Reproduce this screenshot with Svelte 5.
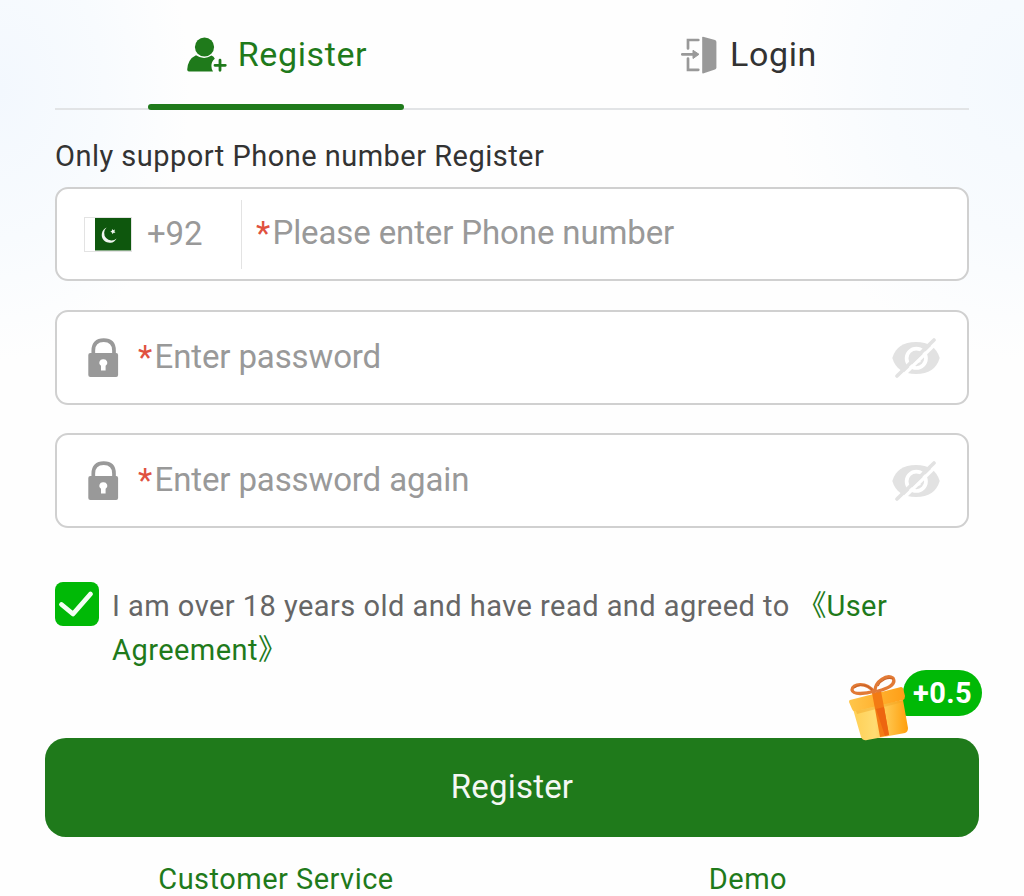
<script lang="ts">
  let phone = $state('');
  let agreed = $state(true);
  let active = $state('register');

  const passwords = [
    { id: 'password', placeholder: 'Enter password' },
    { id: 'confirm', placeholder: 'Enter password again' },
  ];
</script>

<main class="page">
  <nav class="tabs">
    <button type="button" class="tab" class:active={active === 'register'} onclick={() => (active = 'register')}>
      <svg class="user-icon" width="40" height="36" viewBox="0 0 40 36" fill="currentColor">
        <circle cx="17.5" cy="10" r="9.6" />
        <path d="M9 18.2 Q17 23.6 24.5 18.5 Q27 19.5 27.8 21.8 Q24.3 24.8 24.4 29 Q24.4 32 26 34.6 H2 Q0.2 34.6 0.2 32.6 Q0.8 22 9 18.2Z" />
        <path d="M33 23.2V33.3M28 28.3H38.3" fill="none" stroke="currentColor" stroke-width="2.8" stroke-linecap="round" />
      </svg>
      <span>Register</span>
    </button>
    <button type="button" class="tab" class:active={active === 'login'} onclick={() => (active = 'login')}>
      <svg class="door-icon" width="36" height="38" viewBox="0 0 36 38">
        <path d="M17.3 4H7V12.5M7 22.6V33.8H17.3" fill="none" stroke="#999" stroke-width="2.7" stroke-linecap="round" />
        <path d="M1.3 18.3H12" fill="none" stroke="#999" stroke-width="2.7" stroke-linecap="round" />
        <path d="M12 14.3L18 18.3L12 22.5Z" fill="#999" stroke="#999" stroke-linejoin="round" />
        <path d="M22 .8L34 4Q35.4 4.5 35.4 6V31.5Q35.4 33 34 33.5L22 37.4Q21.2 37.4 21.2 36.5V1.5Q21.2.7 22 .8Z" fill="#999" />
      </svg>
      <span>Login</span>
    </button>
  </nav>

  <form class="form" onsubmit={(e) => e.preventDefault()}>
    <label class="caption" for="phone">Only support Phone number Register</label>

    <div class="field phone">
      <div class="country">
        <svg width="48" height="36" viewBox="0 0 48 36">
          <rect x=".5" y="1.5" width="47" height="34" fill="#fff" stroke="#e3e3e3" />
          <rect x="11" y="2" width="36" height="32.5" fill="#0e570d" />
          <path d="M22.6 11.6A7.9 7.9 0 1 0 32.6 22.6A6.9 6.9 0 1 1 22.6 11.6Z" fill="#f1f7f1" />
          <path d="M28 13L29.3 14.2L31 13.6L30.4 15.3L31.4 16.8L29.6 16.8L28.5 18.3L28 16.5L26.3 15.8L27.9 14.8Z" fill="#f1f7f1" />
        </svg>
        <span>+92</span>
      </div>
      <span class="star">*</span>
      <input id="phone" type="tel" placeholder="Please enter Phone number" bind:value={phone} />
    </div>

    {#each passwords as item}
      <div class="field">
        <svg class="lock" width="32" height="40" viewBox="0 0 32 40">
          <path d="M5.3 17V12.5Q5.3 2.1 15.7 2.1Q26 2.1 26 12.5V17" fill="none" stroke="#999" stroke-width="3.7" />
          <rect x=".3" y="15" width="29.8" height="24" rx="2" fill="#999" />
          <path d="M15.3 21.2A3.6 3.6 0 0 1 17.6 27.8V32.6H13V27.8A3.6 3.6 0 0 1 15.3 21.2Z" fill="#fff" />
        </svg>
        <span class="star">*</span>
        <input id={item.id} type="password" placeholder={item.placeholder} />
        <svg class="eye" width="48" height="40" viewBox="0 0 48 40">
          <path d="M.3 20Q5 4 24 4Q43 4 47.7 20Q43 36 24 36Q5 36 .3 20Z" fill="#e2e2e2" />
          <circle cx="24.3" cy="20.3" r="9.7" fill="none" stroke="#fff" stroke-width="3.7" />
          <path d="M27 21.5L24.5 25.2L29 24Z" fill="#fff" />
          <path d="M7.5 41L45 4.4" stroke="#fff" stroke-width="3.4" />
          <path d="M5 38L42 2" stroke="#e2e2e2" stroke-width="3.6" stroke-linecap="round" />
        </svg>
      </div>
    {/each}

    <div class="agreement">
      <button
        type="button"
        class="check"
        role="checkbox"
        aria-checked={agreed}
        aria-label="Agree"
        onclick={() => (agreed = !agreed)}
      >
        {#if agreed}
          <svg width="44" height="44" viewBox="0 0 44 44">
            <path d="M6.5 22.5L18 32L35.5 12" fill="none" stroke="#f4fff4" stroke-width="4.8" stroke-linecap="round" stroke-linejoin="round" />
          </svg>
        {/if}
      </button>
      <p>
        I am over 18 years old and have read and agreed to
        <span class="link"><span class="bracket open">《</span>User<br />Agreement<span class="bracket">》</span></span>
      </p>
    </div>

    <div class="submit-wrap">
      <button type="submit" class="submit">Register</button>
      <div class="bonus">+0.5</div>
      <svg class="gift" width="64" height="68" viewBox="0 0 64 68">
        <defs>
          <linearGradient id="box" x1="0" x2="1">
            <stop offset="0" stop-color="#ffcf55" />
            <stop offset=".4" stop-color="#ffdc72" />
            <stop offset="1" stop-color="#ff9f0d" />
          </linearGradient>
          <linearGradient id="lid" x1="0" x2="1">
            <stop offset="0" stop-color="#ffc64b" />
            <stop offset="1" stop-color="#ff9e16" />
          </linearGradient>
        </defs>
        <path d="M5 35L55 26L60 54Q60 58 57 59L19 66Q15 67 13 63Z" fill="url(#box)" />
        <path d="M2 26L53 13Q55 13 55.500 16L57 22Q57 25 55 26L8 37Q5 38 4 35L1 28Q1 26 2 26Z" fill="url(#lid)" />
        <path d="M8 37L55 26L55 28L9 40Z" fill="#efa424" opacity=".45" />
        <path d="M24 19L33 17L36 33L41 61L32 63L27 35Z" fill="#f37b13" />
        <path d="M28 35L36 33L41 61L37 62Z" fill="#ed6510" />
        <path d="M26 18C18 7 4 10 4 16C5 21 17 20 27 17C27 7 39 0 45 4C49 11 38 15 30 17" fill="none" stroke="#e27a35" stroke-width="3.3" stroke-linecap="round" stroke-linejoin="round" />
        <path d="M6 14C12 9 20 11 24 16M30 12C33 6 40 3 45 5" fill="none" stroke="#cc6428" stroke-width="1.3" />
      </svg>
    </div>
  </form>

  <footer>
    <a href="#service">Customer Service</a>
    <a href="#demo">Demo</a>
  </footer>
</main>

<style>
  :global(body) {
    background: #fefefe;
  }

  .page {
    box-sizing: border-box;
    height: 896px;
    padding: 0 40px;
    overflow: hidden;
    font-family: Roboto, 'Noto Sans CJK SC', sans-serif;
    color: #333;
    background:
      radial-gradient(ellipse 190px 270px at 0 90px, #f3f8fe 0%, #f8fbfe 55%, #fefefe00 100%),
      radial-gradient(ellipse 250px 280px at 100% 80px, #f4f9fe 0%, #f8fbfe 55%, #fefefe00 100%);
  }

  button {
    margin: 0;
    padding: 0;
    border: 0;
    background: none;
    font: inherit;
    color: inherit;
    cursor: pointer;
  }

  .tabs {
    position: relative;
    display: grid;
    grid-template-columns: 1fr 1fr;
    height: 110px;
  }

  .tabs::before {
    content: '';
    position: absolute;
    left: 15px;
    right: 15px;
    bottom: 0;
    height: 2px;
    background: #e2e4e6;
  }

  .tab {
    position: relative;
    display: flex;
    align-items: center;
    justify-content: center;
    padding-left: 2px;
    font-size: 34px;
    letter-spacing: 0.6px;
  }

  .tab span {
    line-height: 40px;
    padding-bottom: 2px;
  }

  .tab.active {
    color: #1f7a1b;
  }

  .tab.active::after {
    content: '';
    position: absolute;
    bottom: 0;
    left: 108px;
    width: 256px;
    height: 6px;
    border-radius: 3px;
    background: #1f7a1b;
  }

  .user-icon {
    margin-right: 11px;
  }

  .door-icon {
    margin-right: 13px;
  }

  .form {
    padding: 0 15px;
  }

  .caption {
    display: block;
    height: 77px;
    line-height: 92px;
    font-size: 29px;
    letter-spacing: 0.48px;
  }

  .field {
    box-sizing: border-box;
    display: flex;
    align-items: center;
    height: 95px;
    margin-bottom: 28px;
    padding: 0 27px 0 31px;
    border: 2px solid #d0d0d0;
    border-radius: 13px;
    background: #fff;
    font-size: 33px;
    letter-spacing: -0.12px;
    color: #999;
  }

  .phone {
    height: 94px;
    margin-bottom: 29px;
    padding-left: 27px;
  }

  .country {
    display: flex;
    align-items: center;
    box-sizing: border-box;
    width: 158px;
    height: 69px;
    margin-right: 14px;
    border-right: 1px solid #e3e3e3;
  }

  .country span {
    margin-left: 15px;
    padding-bottom: 1px;
  }

  .star {
    width: 16.5px;
    padding-bottom: 1px;
    color: #e0523f;
  }

  .lock {
    margin-right: 18px;
  }

  input {
    flex: 1;
    min-width: 0;
    padding: 0 0 3px;
    border: 0;
    outline: 0;
    background: none;
    font: inherit;
    letter-spacing: inherit;
    color: #333;
  }

  input::placeholder {
    color: #999;
    opacity: 1;
  }

  .agreement {
    display: flex;
    height: 156px;
    padding-top: 26px;
    box-sizing: border-box;
  }

  .check {
    width: 44px;
    height: 44px;
    margin-right: 13px;
    border-radius: 8px;
    background: #00b906;
  }

  .agreement p {
    flex: 1;
    margin: 2px 0 0;
    line-height: 44px;
    font-size: 29px;
    letter-spacing: 0.47px;
    color: #666;
    white-space: nowrap;
  }

  .link {
    color: #1f7a1b;
  }

  .bracket {
    display: inline-block;
    width: 15px;
    line-height: 30px;
  }

  .bracket.open {
    width: 29px;
  }

  .submit-wrap {
    position: relative;
    margin: 0 -10px;
    padding-top: 26px;
  }

  .submit {
    display: block;
    width: 100%;
    height: 99px;
    padding-bottom: 2px;
    border-radius: 21px;
    background: #1f7a1b;
    color: #f4f8f4;
    font-size: 33px;
    letter-spacing: 0.2px;
  }

  .bonus {
    position: absolute;
    top: -42px;
    right: -3px;
    width: 79px;
    height: 46px;
    border-radius: 23px 23px 23px 4px;
    background: #00b906;
    color: #fff;
    font-size: 29px;
    font-weight: 700;
    line-height: 46px;
    letter-spacing: 0.4px;
    text-align: center;
  }

  .gift {
    position: absolute;
    top: -38px;
    right: 67px;
  }

  footer {
    display: grid;
    grid-template-columns: 1fr 1fr;
    padding-top: 24px;
    text-align: center;
    font-size: 29px;
    line-height: 36px;
    letter-spacing: 0.48px;
  }

  footer a {
    color: #1f7a1b;
    text-decoration: none;
  }
</style>
